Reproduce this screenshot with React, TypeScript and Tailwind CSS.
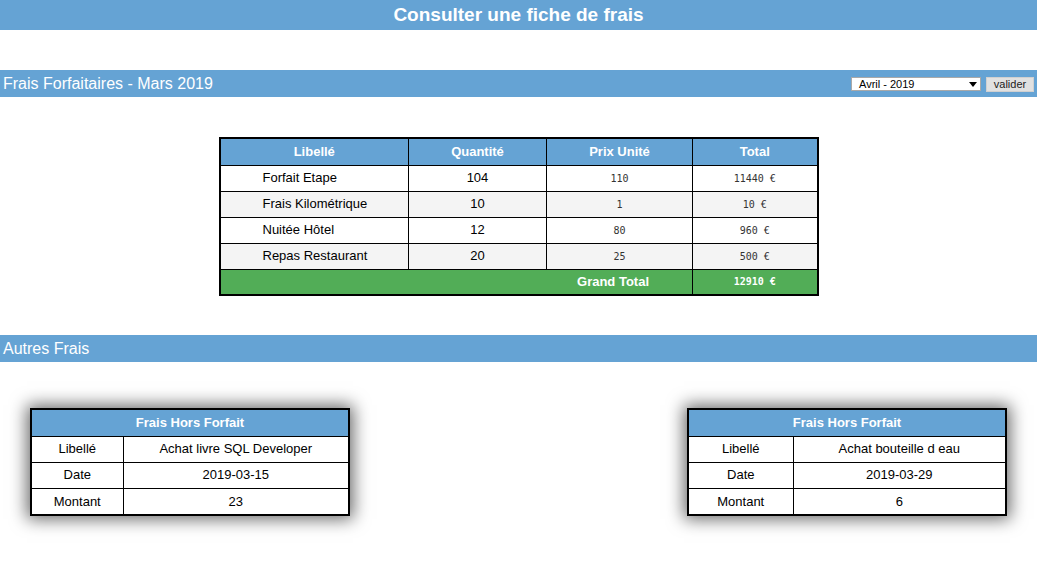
const forfaits = [
  { libelle: "Forfait Etape", quantite: 104, prix: 110, total: "11440 €" },
  { libelle: "Frais Kilométrique", quantite: 10, prix: 1, total: "10 €" },
  { libelle: "Nuitée Hôtel", quantite: 12, prix: 80, total: "960 €" },
  { libelle: "Repas Restaurant", quantite: 20, prix: 25, total: "500 €" },
];

const horsForfait = [
  { libelle: "Achat livre SQL Developer", date: "2019-03-15", montant: 23, col: "w-[92px]" },
  { libelle: "Achat bouteille d eau", date: "2019-03-29", montant: 6, col: "w-[105px]" },
];

function FicheHF({ ligne }: { ligne: (typeof horsForfait)[number] }) {
  return (
    <table className="w-[320px] border-collapse border-2 border-black text-[13px] text-center shadow-[0_0_16px_3px_rgba(0,0,0,0.6)]">
      <thead>
        <tr className="bg-[#65a3d4] h-[27px]">
          <th colSpan={2} className="font-bold text-white border-b border-black">Frais Hors Forfait</th>
        </tr>
      </thead>
      <tbody>
        <tr className="h-[26px]">
          <td className={ligne.col + " border border-black"}>Libellé</td>
          <td className="border border-black">{ligne.libelle}</td>
        </tr>
        <tr className="h-[26px]">
          <td className="border border-black">Date</td>
          <td className="border border-black">{ligne.date}</td>
        </tr>
        <tr className="h-[27px]">
          <td className="border border-black">Montant</td>
          <td className="border border-black">{ligne.montant}</td>
        </tr>
      </tbody>
    </table>
  );
}

export default function App() {
  return (
    <div className="min-h-[584px] bg-white text-black font-['Liberation_Sans',Arial,sans-serif]">
      <div className="h-[30px] bg-[#65a3d4] flex items-center justify-center">
        <h1 className="text-[19px] font-bold text-white">Consulter une fiche de frais</h1>
      </div>

      <div className="mt-[40px] h-[27px] bg-[#65a3d4] flex items-center justify-between pl-[3px] pr-[3px]">
        <h2 className="text-[16px] text-white">Frais Forfaitaires - Mars 2019</h2>
        <div className="flex items-center gap-[5px] mt-[1px]">
          <div className="w-[130px] h-[14px] bg-white border border-[#a9a9a9] flex items-center justify-between pl-[7px] pr-[3px] text-[11px] leading-none">
            <span>Avril - 2019</span>
            <svg width="8" height="5" viewBox="0 0 8 5"><path d="M0 0h8L4 5z" fill="#000" /></svg>
          </div>
          <button className="w-[48px] h-[15px] bg-[#e1e1e1] border border-[#d0d0d0] text-[11px] leading-none text-[#222]">valider</button>
        </div>
      </div>

      <div className="flex justify-center mt-[40px]">
        <table className="w-[600px] border-collapse border-2 border-black text-[13px]">
          <thead>
            <tr className="bg-[#65a3d4] h-[27px] text-white">
              <th className="w-[189px] border border-black font-bold">Libellé</th>
              <th className="w-[138px] border border-black font-bold">Quantité</th>
              <th className="w-[146px] border border-black font-bold">Prix Unité</th>
              <th className="border border-black font-bold">Total</th>
            </tr>
          </thead>
          <tbody>
            {forfaits.map((f, i) => (
              <tr key={f.libelle} className={i % 2 === 1 ? "bg-[#f4f4f4] h-[26px]" : "bg-white h-[26px]"}>
                <td className="border border-black pl-[42px]">{f.libelle}</td>
                <td className="border border-black text-center">{f.quantite}</td>
                <td className="border border-black text-center font-['DejaVu_Sans_Mono',monospace] text-[10px] text-[#333]">{f.prix}</td>
                <td className="border border-black text-center font-['DejaVu_Sans_Mono',monospace] text-[10px] text-[#333]">{f.total}</td>
              </tr>
            ))}
            <tr className="bg-[#52ad57] h-[26px] text-white">
              <td colSpan={3} className="border border-black text-right pr-[43px] font-bold">Grand Total</td>
              <td className="border border-black text-center font-bold font-['DejaVu_Sans_Mono',monospace] text-[10px]">12910 €</td>
            </tr>
          </tbody>
        </table>
      </div>

      <div className="mt-[39px] h-[27px] bg-[#65a3d4] flex items-center pl-[3px]">
        <h2 className="text-[16px] text-white">Autres Frais</h2>
      </div>

      <div className="flex justify-between px-[30px] mt-[46px] pb-[60px]">
        {horsForfait.map((l) => (
          <FicheHF key={l.libelle} ligne={l} />
        ))}
      </div>
    </div>
  );
}
